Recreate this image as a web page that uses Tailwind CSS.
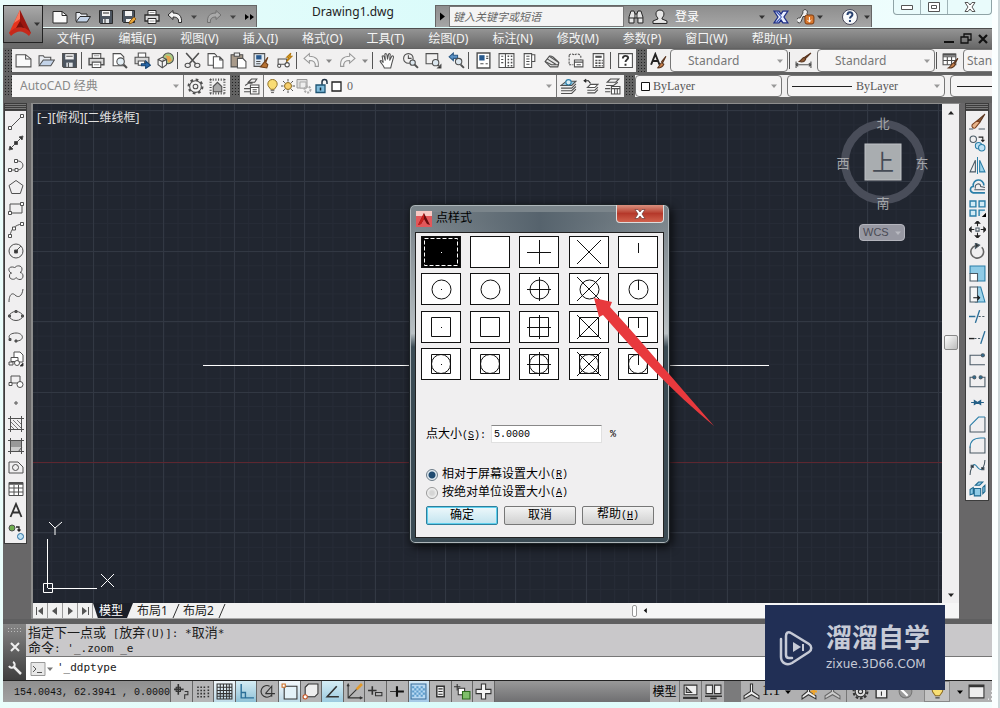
<!DOCTYPE html>
<html lang="zh-CN">
<head>
<meta charset="utf-8">
<meta name="viewport" content="width=device-width, initial-scale=1">
<title>Drawing1.dwg</title>
<script src="https://cdn.jsdelivr.net/npm/@tailwindcss/browser@4"></script>
</head>
<body class="relative flex min-h-screen flex-col overflow-x-hidden bg-linear-to-r from-[#eafdfb] via-[#d9fbfa] to-[#f4fefe] pl-[3px] pr-2 font-['Noto_Sans','Noto_Sans_CJK_SC',sans-serif] text-xs text-[#222]">

<svg class="hidden" aria-hidden="true">
  <symbol id="new" viewBox="0 0 16 16"><path fill="#fafafa" d="M1 2.500h9l5 4V14H1z"/><path d="M10 2.500V6.500h5"/></symbol>
  <symbol id="open" viewBox="0 0 16 16"><path fill="#e8ecf2" d="M1 12V3.500h4l1 1.500h6v2.500"/><path fill="#c3d3e8" d="M1 13l4-5.500h10.500L12 13z"/></symbol>
  <symbol id="save" viewBox="0 0 16 16"><path fill="#4c5560" d="M1.500 1.500h13v13h-12l-1-1z"/><path fill="#f2f2f2" stroke="none" d="M4 2h8v5H4z"/><path fill="#dfe3e6" stroke="none" d="M5 10h6v4H5z"/><path d="M5 4h6M7 10v4"/></symbol>
  <symbol id="saveas" viewBox="0 0 16 16"><path fill="#4c5560" d="M1.500 1.500h12v12h-11l-1-1z"/><path fill="#f2f2f2" stroke="none" d="M4 2h7v5H4zM5 10h5v3H5z"/><path fill="#e8a83c" stroke="#8d5a18" d="M8 15l1-3 4-4 2 2-4 4z"/></symbol>
  <symbol id="print" viewBox="0 0 16 16"><path fill="#fff" d="M4 6V1.500h8V6"/><path fill="#d8d8d8" stroke-width="1.300" d="M1 6h14v6H1z"/><path fill="#fff" d="M4 9.500h8v5H4z"/><path stroke="#999" d="M5.500 3.500h5M5.500 12h5"/></symbol>
  <symbol id="undo" viewBox="0 0 16 16"><path fill="#f4f4f4" d="M1 6l5-4.500V4c6 0 9 3 8.500 9.500h-3C12 9.500 10 8 6 8v2.500z"/></symbol>
  <symbol id="redo" viewBox="0 0 16 16"><path fill="inherit" d="M15 6l-5-4.500V4C4 4 1 7 1.500 13.500h3C4 9.500 6 8 10 8v2.500z"/></symbol>
  <symbol id="dd" viewBox="0 0 8 8"><path stroke="none" d="M1 2.500h6L4 6z"/></symbol>
</svg>

<!-- Title bar and menu -->
<header class="flex h-12">
  <div class="w-10 shrink-0 pt-[5px]">
    <button aria-label="应用程序菜单" class="flex h-[38px] w-10 items-center border border-[#222] bg-linear-to-b from-[#a9a9a9] to-[#6f6f6f]">
      <svg class="ml-[3px] h-8 w-[26px]" viewBox="0 0 26 32"><path fill="#e5341d" d="M13 2L2 25l6-1 5-9z"/><path fill="#9b1710" d="M13 2l11 23-6-1-5-9z"/><path fill="#c7291a" d="M2 25C8 17 18 17 24 25l-2 3c-6-6-12-6-18 0z"/><path fill="#7b100b" d="M9 20c3-1 5-1 8 0l-4-7z"/><path fill="#f8785c" d="M13 2L7 15l6-4z"/></svg>
      <svg class="size-2 fill-[#333]"><use href="#dd"/></svg>
    </button>
    <div class="h-[5px] bg-[#6a6a6a]"></div>
  </div>
  <div class="min-w-0 flex-1">
    <div class="flex h-7">
      <div class="mt-[5px] flex h-[22px] w-[214px] shrink-0 items-center border border-l-0 border-b-0 border-[#666] bg-linear-to-b from-[#8e8e8e] to-[#a0a0a0] fill-none stroke-[#2b2b2b] pl-[9px] [&>button>svg]:size-4 [&>button]:mr-[7px]">
        <button aria-label="新建"><svg><use href="#new"/></svg></button>
        <button aria-label="打开"><svg><use href="#open"/></svg></button>
        <button aria-label="保存"><svg><use href="#save"/></svg></button>
        <button aria-label="另存为"><svg><use href="#saveas"/></svg></button>
        <button aria-label="打印"><svg><use href="#print"/></svg></button>
        <button aria-label="放弃"><svg><use href="#undo"/></svg></button>
        <svg class="mr-2 size-2 fill-[#444]"><use href="#dd"/></svg>
        <button aria-label="重做" class="fill-[#aaa] stroke-[#707070]"><svg><use href="#redo"/></svg></button>
        <svg class="mr-2 size-2 fill-[#444]"><use href="#dd"/></svg>
        <svg class="h-2 w-[9px] fill-black stroke-none" viewBox="0 0 9 8"><path d="M0 1l4 3-4 3zM5 1l4 3-4 3z"/></svg>
      </div>
      <h1 class="flex-1 truncate pl-[14px] text-center leading-6">Drawing1.dwg</h1>
      <div class="mt-[5px] flex h-[22px] w-[437px] shrink-0 items-center border border-b-0 border-[#666] bg-linear-to-b from-[#8e8e8e] to-[#a6a6a6] fill-none stroke-[#222]">
        <svg class="h-full w-[13px]" viewBox="0 0 13 20"><path fill="#000" stroke="none" d="M4 6l5 4-5 4z"/></svg>
        <input type="text" aria-label="搜索" placeholder="键入关键字或短语" class="h-full w-[176px] border border-[#777] bg-[#f4f4f4] px-[3px] text-[11px] italic placeholder:text-[#666]">
        <svg class="ml-1 size-4" viewBox="0 0 16 16"><path fill="#e6e6e6" d="M1 8l2-6h3l1 3h2l1-3h3l2 6v6h-5V9H6v5H1zM1 9h5M10 9h5M7 5v4M9 5v4"/></svg>
        <svg class="ml-2 size-4" viewBox="0 0 16 16"><path fill="#e6e6e6" d="M8 1c3 0 4 2 4 4 0 3-2 3-2 5l5 2v2.500H1V12l5-2C6 8 4 8 4 5c0-2 1-4 4-4z"/></svg>
        <button class="ml-[7px] w-[84px] text-left text-white">登录</button>
        <svg class="size-2 fill-[#333]"><use href="#dd"/></svg>
        <svg class="ml-[7px] size-4" viewBox="0 0 16 16"><path fill="#e9efff" stroke="#1f2f86" stroke-width="1.300" d="M1 2h5l2 3 2-3h5l-4 6 4 6h-5l-2-3-2 3H1l4-6z"/><path fill="#3452b5" stroke="none" d="M3 3l5 5-5 5h2l4-5-4-5z"/></svg>
        <svg class="ml-2 size-[18px]" viewBox="0 0 18 18"><path fill="#eee" stroke="#444" d="M8 1.500a2.500 2.500 0 0 1 2 4l1 3H6L4 14a2.500 2.500 0 1 1-1-4l3-5a2.500 2.500 0 0 1 2-3.500z"/><rect x="8" y="7" width="9" height="9" rx="2" fill="#d9782e" stroke="#7a3a10"/><path stroke="#fff" d="M12.500 9v5M10.500 12l2 2 2-2"/></svg>
        <svg class="ml-px size-2 fill-[#333]"><use href="#dd"/></svg>
        <svg class="ml-[17px] size-[18px]" viewBox="0 0 18 18"><circle cx="9" cy="9" r="7.500" fill="#f7f9fb" stroke="#445"/><path stroke="#27406f" stroke-width="2" d="M6.500 7c0-3.500 5-3.500 5-.5C11.500 8.500 9 8.500 9 10.500M9 12v2"/></svg>
        <svg class="ml-1 size-2 fill-[#333]"><use href="#dd"/></svg>
      </div>
      <div class="ml-[21px] flex h-[15px] w-[99px] shrink-0 rounded-b border border-t-0 border-[#8fa3a6] bg-[#e9fbfb] fill-white stroke-[#555] [&>button]:grid [&>button]:place-items-center">
        <button aria-label="最小化" class="w-[27px] border-r border-[#9fb3b6]"><svg class="h-[5px] w-3" viewBox="0 0 12 5"><path d="M.5.5h11v4H.5z"/></svg></button>
        <button aria-label="还原" class="w-[27px] border-r border-[#9fb3b6]"><svg class="h-[10px] w-3" viewBox="0 0 12 10"><path d="M.5.5h11v9H.5zM3.500 3.500h5v3h-5z"/></svg></button>
        <button aria-label="关闭" class="flex-1"><svg class="h-[10px] w-3" viewBox="0 0 12 10"><path d="M1 .5h3l2 2.500L8 .5h3L8 5l3 4.500H8L6 7 4 9.500H1L4 5z"/></svg></button>
      </div>
    </div>
    <nav class="flex h-5 items-center gap-6 border-t border-[#4e4e4e] bg-linear-to-b from-[#949494] to-[#686868] pl-[14px] pr-1 whitespace-nowrap text-[#f4f4f4]">
      <a href="#">文件(F)</a><a href="#">编辑(E)</a><a href="#">视图(V)</a><a href="#">插入(I)</a><a href="#">格式(O)</a><a href="#">工具(T)</a><a href="#">绘图(D)</a><a href="#">标注(N)</a><a href="#">修改(M)</a><a href="#">参数(P)</a><a href="#">窗口(W)</a><a href="#">帮助(H)</a>
      <span class="ml-auto flex gap-[6px] fill-none stroke-[#111]">
        <button aria-label="最小化图形"><svg class="h-3 w-[10px]" viewBox="0 0 10 12"><path stroke-width="2" d="M0 9h10"/></svg></button>
        <button aria-label="还原图形"><svg class="size-3" viewBox="0 0 12 12"><path stroke-width="1.300" d="M4 4V1h7v6H8M1 4h7v6H1z"/></svg></button>
        <button aria-label="关闭图形"><svg class="h-3 w-[10px]" viewBox="0 0 10 12"><path stroke-width="2.200" d="M1 2l8 8M9 2l-8 8"/></svg></button>
      </span>
    </nav>
  </div>
</header>

<!-- Toolbars -->
<div class="flex h-[55px] flex-col gap-[3px] overflow-hidden bg-[#626262] pt-px pl-px">
  <div class="flex h-[23px] shrink-0 items-stretch fill-none stroke-[#505050] [&_button]:grid [&_button]:w-[22px] [&_button]:shrink-0 [&_button]:place-items-center [&_button>svg]:size-[17px]">
    <i class="w-2 shrink-0 bg-[radial-gradient(#222_1px,transparent_1px)] bg-size-[3px_3px]"></i>
    <div class="flex shrink-0 items-stretch gap-px bg-[#f1f0f0]">
      <button aria-label="新建"><svg><use href="#new"/></svg></button>
      <button aria-label="打开"><svg><use href="#open"/></svg></button>
      <button aria-label="保存"><svg><use href="#save"/></svg></button>
      <i class="my-[3px] mr-[2px] w-px bg-[#555]"></i>
      <button aria-label="打印"><svg><use href="#print"/></svg></button>
      <button aria-label="打印预览"><svg viewBox="0 0 16 16"><path fill="#fff" d="M2 1.500h7l3 3V13H2z"/><circle cx="9" cy="9" r="3.500" fill="#e3eef5"/><path stroke-width="2" d="M12 12l3 3"/></svg></button>
      <button aria-label="发布"><svg viewBox="0 0 16 16"><path fill="#fff" d="M4 5V1h7v4"/><path fill="#d8d8d8" d="M1 5h13v6H1z"/><path fill="#fff" d="M4 8.500h6v4H4z"/><path fill="#2a6aad" stroke="#174674" d="M7 11h4V8.500l4.500 4-4.500 3V13H7z"/></svg></button>
      <button aria-label="三维打印"><svg viewBox="0 0 16 16"><circle cx="10.500" cy="6" r="5" fill="#a9cb85"/><path fill="#e9a24f" stroke="none" d="M8 3l4 1 2 4-3 2z"/><path fill="#f4f4f4" d="M1 7l4-2 4 2v5l-4 3-4-3zM1 7l4 2 4-2M5 9v6"/></svg></button>
      <i class="my-[3px] mr-[2px] w-px bg-[#555]"></i>
      <button aria-label="剪切"><svg viewBox="0 0 16 16"><path stroke-width="1.500" d="M2 1l9 10M14 1L5 11"/><ellipse cx="3.500" cy="12.500" rx="2.500" ry="2"/><ellipse cx="12.500" cy="12.500" rx="2.500" ry="2"/></svg></button>
      <button aria-label="复制"><svg viewBox="0 0 16 16"><path fill="#fff" d="M1 1.500h6l2 2v9H1z"/><path fill="#fff" d="M6 4.500h6l3 3V15H6zM12 4.500v3h3"/></svg></button>
      <button aria-label="粘贴"><svg viewBox="0 0 16 16"><path fill="#a99b8b" d="M1 2.500h11V14H1z"/><path fill="#eee" d="M4 1h5v3H4z"/><path fill="#fff" d="M7 6h5l3 3v6H7z"/></svg></button>
      <button aria-label="特性匹配"><svg viewBox="0 0 16 16"><path fill="#dfe9f2" d="M1 1.500h10v12H1z"/><path fill="#27598e" stroke="none" d="M3 3h5v4H3z"/><path d="M3 9h4M3 11h4"/><path fill="#b87333" stroke="#70401a" d="M14 5l-2 5 2 2-1 3-6-1 4-5z"/></svg></button>
      <button aria-label="块编辑器"><svg viewBox="0 0 16 16"><path d="M2 6.500h8v5H2z"/><circle cx="10.500" cy="12" r="2" fill="#fff"/><circle cx="3" cy="13" r="1.500" fill="#fff"/><path fill="#f3b62f" stroke="#b47a10" d="M14 1l-4 4h2l-2 4 5-5h-2z"/></svg></button>
      <i class="my-[3px] mr-[2px] w-px bg-[#555]"></i>
      <button aria-label="放弃" class="stroke-[#999]"><svg><use href="#undo"/></svg></button>
      <svg class="mx-[2px] my-auto size-2 fill-[#888]"><use href="#dd"/></svg>
      <button aria-label="重做" class="fill-[#f4f4f4] stroke-[#999]"><svg><use href="#redo"/></svg></button>
      <svg class="mx-[2px] my-auto size-2 fill-[#888]"><use href="#dd"/></svg>
      <i class="my-[3px] mr-[2px] w-px bg-[#555]"></i>
      <button aria-label="平移"><svg viewBox="0 0 16 16"><path fill="#fff" d="M5 15c-1-3-3-4-4-6.500 1-1 2 0 3 1.500L3 4c1-1 2 0 2 1l1 3-.5-6c1-1 2 0 2 1L8 7l1-5c1-1 2 0 1.500 1L10 8l2-4c1-1 2 0 1.500 1.500L12 11l-1 4z"/></svg></button>
      <button aria-label="实时缩放"><svg viewBox="0 0 16 16"><circle cx="6" cy="6" r="4.500"/><path d="M6 3v3h3"/><circle cx="10" cy="10" r="2.500" fill="#dbe6ee"/><path stroke-width="1.800" d="M12 12l3 3"/></svg></button>
      <button aria-label="窗口缩放"><svg viewBox="0 0 16 16"><path d="M1 1.500h11V11H1z"/><circle cx="10" cy="10" r="3" fill="#dbe6ee"/><path stroke-width="1.800" d="M12 12l1 1"/><path fill="#000" d="M15 12v3h-3z"/></svg></button>
      <button aria-label="缩放上一个"><svg viewBox="0 0 16 16"><path fill="#5c93c7" stroke="#2d5a86" d="M1 4.500L5 1v2h4v3H5v2z"/><circle cx="10" cy="9" r="3" fill="#dbe6ee"/><path stroke-width="1.800" d="M12 12l3 3"/></svg></button>
      <i class="my-[3px] mr-[2px] w-px bg-[#555]"></i>
      <button aria-label="特性"><svg viewBox="0 0 16 16"><path stroke-width="1.300" fill="#fff" d="M2 1h12v14H2z"/><path fill="#27598e" stroke="none" d="M4 3h5v5H4z"/><path d="M10.500 4h2M10.500 6h2M5 11h3M10 11h2"/></svg></button>
      <button aria-label="设计中心"><svg viewBox="0 0 16 16"><path fill="#fff" d="M1 1.500h14v13H1zM7 1.500v13M3 4h2M3 7h2M3 10h2"/><path stroke-width="1.500" d="M9 4h1.500M12 4h1.500M9 7h1.500M12 7h1.500M9 10h1.500M12 10h1.500M9 13h1.500M12 13h1.500"/></svg></button>
      <button aria-label="工具选项板"><svg viewBox="0 0 16 16"><path fill="#fff" d="M3 1.500h7v13H3zM10 2.500h3V9h-3"/><path d="M5 4h3M5 6.500h3M5 9h3M5 11.500h3"/></svg></button>
      <button aria-label="图纸集"><svg viewBox="0 0 16 16"><path fill="#e6e6e6" d="M1 9l4-5 9 6-1 4H6z"/><path d="M1 9l6 3h7M3 6.500l8 5M5 4c2-1 4 1 9 6"/></svg></button>
      <button aria-label="标记集"><svg viewBox="0 0 16 16"><path stroke-dasharray="2 1" d="M2 3c2-2 4-1 5 0 2-2 5-1 6 1v3M2 3v9h4"/><path fill="#fff" d="M7 7.500h8V14H7zM7 9.500h8M9 12h4"/></svg></button>
      <button aria-label="计算器"><svg viewBox="0 0 16 16"><path fill="#fff" d="M3 1.500h10v13H3z"/><path stroke-width="2" d="M5 4.500h6"/><path stroke-dasharray="2 1" stroke-width="1.500" d="M5 8h7M5 10.500h7M5 13h7"/></svg></button>
      <i class="my-[3px] mr-[2px] w-px bg-[#555]"></i>
      <button aria-label="帮助"><svg viewBox="0 0 16 16"><path fill="#fff" d="M1.500 1.500h13v13h-13z"/><path stroke="#333" stroke-width="1.800" d="M5.500 6c0-3 5-3 5-.5C10.500 7 8 7.500 8 9.500M8 11v2"/></svg></button>
    </div>
    <i class="mx-px w-[9px] shrink-0 bg-[radial-gradient(#222_1px,transparent_1px)] bg-size-[3px_3px]"></i>
    <div class="flex min-w-0 flex-1 items-stretch overflow-hidden bg-[#f1f0f0]">
      <button aria-label="文字样式"><svg viewBox="0 0 16 16"><path stroke="#222" stroke-width="1.800" d="M1 12L5 2l4 10M2.500 8.500h5"/><path fill="#c9804a" stroke="#5a3620" d="M15 4l-4 5 1 1zM7 15c2-1 2-4 4-5l2 1.500c-1 2.500-3 3.500-6 3.500z"/></svg></button>
      <div class="mx-px flex w-[118px] shrink-0 items-center rounded-sm border border-[#777] bg-[#f6f5f5] pr-[3px] text-[#777]"><select aria-label="文字样式名" class="min-w-0 flex-1 appearance-none pl-[17px]"><option>Standard</option></select><svg class="size-2 fill-[#999]"><use href="#dd"/></svg></div>
      <i class="my-[3px] w-px shrink-0 bg-[#555]"></i>
      <button aria-label="标注样式" class="mx-[2px]"><svg viewBox="0 0 16 16"><path d="M1 9v6M15 9v6M1 12h14M3 10.500L1 12l2 1.500M13 10.500l2 1.500-2 1.500"/><path fill="#8c5a34" stroke="#5a3620" d="M15 1L9 5l1 1zM4 9c2-1 3-4 5-4l1 2C9 9 7 10 4 9z"/></svg></button>
      <div class="mx-px flex w-[118px] shrink-0 items-center rounded-sm border border-[#777] bg-[#f6f5f5] pr-[3px] text-[#777]"><select aria-label="标注样式名" class="min-w-0 flex-1 appearance-none pl-[17px]"><option>Standard</option></select><svg class="size-2 fill-[#999]"><use href="#dd"/></svg></div>
      <i class="my-[3px] w-px shrink-0 bg-[#555]"></i>
      <button aria-label="表格样式" class="mx-[2px]"><svg viewBox="0 0 16 16"><path fill="#fff" d="M1 2h12v10H1z"/><path d="M1 4.500h12M1 8h12M5 4v8M9 4v8"/><path stroke-width="2" d="M1 2.500h12"/><path fill="#c9804a" stroke="#5a3620" d="M15 6l-4 4 1 1zM6 15c2-1 3-4 5-5l1.500 1.500C12 14 9 15.500 6 15z"/></svg></button>
      <div class="flex w-[118px] shrink-0 items-center rounded-sm border border-[#777] bg-[#f6f5f5] text-[#777]"><select aria-label="表格样式名" class="min-w-0 flex-1 appearance-none pl-[3px]"><option>Standard</option></select></div>
    </div>
  </div>

  <div class="flex h-[22px] shrink-0 items-stretch fill-none stroke-[#505050] [&_button]:grid [&_button]:w-[22px] [&_button]:shrink-0 [&_button]:place-items-center [&_button>svg]:size-[17px]">
    <i class="w-2 shrink-0 bg-[radial-gradient(#222_1px,transparent_1px)] bg-size-[3px_3px]"></i>
    <div class="flex w-[218px] shrink-0 items-stretch bg-[#f1f0f0]">
      <div class="flex w-[172px] items-center border-r border-[#777] bg-[#f6f5f5] pr-[3px] text-[#888]"><select aria-label="工作空间" class="min-w-0 flex-1 appearance-none pl-2"><option>AutoCAD 经典</option></select><svg class="size-2 fill-[#999]"><use href="#dd"/></svg></div>
      <button aria-label="工作空间设置"><svg viewBox="0 0 16 16"><circle cx="8" cy="8" r="6.500" stroke-width="2" stroke-dasharray="2.500 2.600"/><circle cx="8" cy="8" r="5.500" fill="#f4f4f4"/><circle cx="8" cy="8" r="2.200"/></svg></button>
      <button aria-label="我的工作空间"><svg viewBox="0 0 16 16"><path stroke-dasharray="1 1.500" stroke-width="2" d="M1 1.500h14M1 14.500h14M1.500 1v14M14.500 1v14"/><path fill="#aaa" d="M4 8l4-4 4 4v5H4z"/></svg></button>
    </div>
    <i class="mx-px w-2 shrink-0 bg-[radial-gradient(#222_1px,transparent_1px)] bg-size-[3px_3px]"></i>
    <div class="flex w-[384px] shrink-0 items-stretch bg-[#f1f0f0]">
      <button aria-label="图层特性"><svg viewBox="0 0 16 16"><path d="M5 4l3-3h5l-2 3zM2 7l3-2h4M1 10h6M1 13h6"/><path fill="#fff" d="M7 6.500h8V15H7zM7 9h8M9 11h4M9 13h4"/></svg></button>
      <div class="ml-px flex w-[294px] items-center border-x border-[#777] bg-[#f6f5f5] pr-[3px] pl-px [&>svg]:shrink-0">
        <svg class="size-[15px]" viewBox="0 0 16 16"><path fill="#f9dc74" stroke="#8a6a20" d="M6 11C5 9 3 8 3 5.500a5 5 0 0 1 10 0C13 8 11 9 10 11z"/><path d="M6 12.500h4M6.500 14.500h3"/></svg>
        <svg class="size-4" viewBox="0 0 16 16"><circle cx="8" cy="8" r="3.500" fill="#f6cf6e" stroke="#8a6a20"/><path stroke="#555" d="M8 1v2.500M8 12.500V15M1 8h2.500M12.500 8H15M3 3l1.800 1.800M11.200 11.200L13 13M13 3l-1.800 1.800M4.800 11.200L3 13"/></svg>
        <svg class="size-4" viewBox="0 0 16 16"><path fill="#ddd" stroke="#999" d="M1 1.500h10V10H1z"/><path fill="#eee" stroke="#aaa" d="M4 4h6v6H4z"/><circle cx="11.500" cy="11.500" r="3" stroke="#aaa" stroke-dasharray="2 1" stroke-width="2"/></svg>
        <svg class="ml-[2px] size-4" viewBox="0 0 16 16"><path stroke="#234" stroke-width="1.500" d="M8 7V4c0-3.500 5-3.500 5 0v2"/><path fill="#7fbcdc" stroke="#1f5473" stroke-width="1.300" d="M2 7h9v7.500H2z"/><path stroke="#123" stroke-width="1.500" d="M6.500 9.500v3"/></svg>
        <svg class="size-[13px]" viewBox="0 0 13 13"><path fill="#fff" stroke="#222" stroke-width="1.300" d="M2 2h9v9H2z"/></svg>
        <select aria-label="图层" class="min-w-0 flex-1 appearance-none pl-1 font-['Liberation_Serif',serif] text-[#666]"><option>0</option></select>
        <svg class="size-2 fill-[#999]"><use href="#dd"/></svg>
      </div>
      <button aria-label="置为当前"><svg viewBox="0 0 16 16"><path fill="#9cc8de" d="M1 7l5-4h9l-4 4z"/><circle cx="8" cy="4" r="2.500" fill="#d7ecf6" stroke="#2b7fa8"/><path d="M1 9.500h10l4-4M1 12h10l4-4M1 14.500h10l4-4"/></svg></button>
      <button aria-label="上一个图层"><svg viewBox="0 0 16 16"><path stroke="#222" d="M2 2.500h4L8 5M4 1L2 2.500 4 4"/><path fill="#fff" d="M5 9l3-3h7l-3 3zM5 11.500h7l3-3M5 14h7l3-3"/></svg></button>
      <button aria-label="图层状态"><svg viewBox="0 0 16 16"><path d="M3 4l3-3h8l-3 3zM2 7h7l4-3M1 10h5M1 13h5"/><path fill="#fff" d="M7 8h8v7H7zM7 10h8M10 10v5M12.500 10v5"/></svg></button>
    </div>
    <i class="mx-px w-[9px] shrink-0 bg-[radial-gradient(#222_1px,transparent_1px)] bg-size-[3px_3px]"></i>
    <div class="flex min-w-0 flex-1 items-stretch gap-[5px] overflow-hidden bg-[#f1f0f0] font-['Liberation_Serif',serif] text-[#555]">
      <div class="flex w-[147px] shrink-0 items-center rounded-sm border border-[#777] bg-[#f6f5f5] pr-[3px] pl-1"><svg class="size-[11px]" viewBox="0 0 11 11"><path fill="#fff" stroke="#111" d="M1.500 1.500h8v8h-8z"/></svg><select aria-label="颜色" class="min-w-0 flex-1 appearance-none pl-[2px]"><option>ByLayer</option></select><svg class="size-2 fill-[#999]"><use href="#dd"/></svg></div>
      <div class="flex w-[158px] shrink-0 items-center rounded-sm border border-[#777] bg-[#f6f5f5] pr-[3px] pl-1"><span class="h-px w-[60px] bg-[#222]"></span><select aria-label="线型" class="min-w-0 flex-1 appearance-none pl-1"><option>ByLayer</option></select><svg class="size-2 fill-[#999]"><use href="#dd"/></svg></div>
      <div class="flex w-[158px] shrink-0 items-center rounded-sm border border-[#777] bg-[#f6f5f5] pl-[6px]"><span class="h-px w-[60px] bg-[#222]"></span></div>
    </div>
  </div>
</div>

<!-- Work area -->
<main class="flex flex-1 items-stretch bg-[#686768] pl-px pr-[3px]">
  <aside class="flex w-[23px] shrink-0 flex-col self-start border border-[#3c3c3c] bg-[#f0eff0] fill-none stroke-[#505050]">
    <i class="h-[7px] border-b border-[#444] bg-[repeating-linear-gradient(#777_0_1px,#3c3c3c_1px_2px)]"></i>
    <div class="flex h-[432px] flex-col [&>button]:grid [&>button]:flex-1 [&>button]:place-items-center [&_svg]:size-4">
      <button aria-label="直线"><svg viewBox="0 0 16 16"><path d="M2 14L14 2"/><path fill="#fff" d="M.5 12.500h3v3h-3zM12.500.5h3v3h-3z"/></svg></button>
      <button aria-label="构造线"><svg viewBox="0 0 16 16"><path d="M2 14L14 2"/><path fill="#333" d="M1 15l1-4 3 3zM15 1l-1 4-3-3zM6.500 6.500h3v3h-3z"/></svg></button>
      <button aria-label="多段线"><svg viewBox="0 0 16 16"><path d="M1 13h8M8 4c9-1 9 9 1 9"/><path fill="#fff" d="M.5 11.500h3v3h-3zM7 11.500h3v3H7zM6.500 2.500h3v3h-3z"/></svg></button>
      <button aria-label="正多边形"><svg viewBox="0 0 16 16"><path d="M8 1.500l7 5-2.700 8H3.700L1 6.500z"/></svg></button>
      <button aria-label="矩形"><svg viewBox="0 0 16 16"><path d="M2 4h12v9H2z"/><path fill="#fff" d="M.5 11.500h3v3h-3zM12.500 2.500h3v3h-3z"/></svg></button>
      <button aria-label="圆弧"><svg viewBox="0 0 16 16"><path d="M2 14C3 7 7 3 14 2"/><path fill="#fff" d="M.5 12.500h3v3h-3zM4.500 5h3v3h-3zM12.500.5h3v3h-3z"/></svg></button>
      <button aria-label="圆"><svg viewBox="0 0 16 16"><circle cx="8" cy="8" r="7"/><path d="M8 8l5-5"/><path fill="#333" d="M6.500 7h3v3h-3z"/></svg></button>
      <button aria-label="修订云线"><svg viewBox="0 0 16 16"><path d="M3 8C0 6 0 2 4 2c1 0 2 0 2.500 1C8 0 14 0 14 4c0 2-1 3-2 3.500 4 0 4 7 0 7-2 0-3-1-4-2-1 3-7 2-6.500-1.500C1.500 9 2 8 4 8"/></svg></button>
      <button aria-label="样条曲线"><svg viewBox="0 0 16 16"><path d="M1 15C1 8 4 5 7 8s7 2 8-6"/></svg></button>
      <button aria-label="椭圆"><svg viewBox="0 0 16 16"><ellipse cx="8" cy="8" rx="6.500" ry="4.500"/><path fill="#555" d="M.5 7h2v2h-2zM13.500 7h2v2h-2zM7 2.500h2v2H7z"/></svg></button>
      <button aria-label="椭圆弧"><svg viewBox="0 0 16 16"><path d="M2 9C-1 5 4 3 8 3c8 0 9 8 0 8"/><path fill="#555" d="M1 8.500h2v2H1zM7 10h2v2H7z"/></svg></button>
      <button aria-label="插入块"><svg viewBox="0 0 16 16"><path fill="#fff" d="M6 1h6l3 3v7H6z"/><path fill="#fff" d="M3 6.500h7v4H3z"/><circle cx="9" cy="12" r="2.500" fill="#fff"/><path d="M1 11h4v3H1z"/><path fill="#000" d="M15 12v3h-3z"/></svg></button>
      <button aria-label="创建块"><svg viewBox="0 0 16 16"><path d="M3 3h9v7H3z"/><circle cx="12" cy="11.500" r="3" fill="#fff"/><path fill="#fff" d="M1 9.500h3v3H1z"/></svg></button>
      <button aria-label="点"><svg viewBox="0 0 16 16"><path fill="#fff" d="M7 7h2v2H7z"/></svg></button>
      <button aria-label="图案填充"><svg viewBox="0 0 16 16"><path d="M2.500 0v16M13.500 0v16M0 2.500h16M0 13.500h16"/><path stroke="#777" d="M3 6l7 7M3 10l3 3M5 4l8 8M9 4l4 4"/></svg></button>
      <button aria-label="渐变色"><svg viewBox="0 0 16 16"><path fill="#999" stroke="none" d="M3 3h10v7H3z"/><path fill="#ccc" stroke="none" d="M3 9h10v4H3z"/><path d="M2.500 0v16M13.500 0v16M0 2.500h16M0 13.500h16M10 14l4-5"/></svg></button>
      <button aria-label="面域"><svg viewBox="0 0 16 16"><path d="M1 3h9l5 5v6H1z"/><circle cx="7.500" cy="8.500" r="3"/></svg></button>
      <button aria-label="表格"><svg viewBox="0 0 16 16"><path fill="#fff" d="M1 1.500h14v13H1z"/><path stroke-width="2.500" d="M1 2.500h14"/><path d="M1 7h14M1 11h14M6 4v11M10.500 4v11"/></svg></button>
      <button aria-label="多行文字"><svg viewBox="0 0 16 16"><path stroke="#333" stroke-width="1.800" d="M2.500 15L8 2l5.500 13M4.500 10.500h7"/></svg></button>
      <button aria-label="添加选定对象"><svg viewBox="0 0 16 16"><circle cx="4" cy="4" r="3" fill="#6fae4f"/><circle cx="12.500" cy="12.500" r="3" fill="#bfe2f5" stroke="#2b6fa0"/><path stroke="#222" stroke-width="1.300" d="M8 3h3v4M9.500 5.500L11 7l1.500-1.500"/></svg></button>
    </div>
  </aside>

  <section class="mx-1 flex min-w-0 flex-1 flex-col border-l-2 border-t border-r-2 border-[#8d8d8d] border-r-[#686768]">
    <div class="flex flex-1">
      <div class="relative min-w-0 flex-1 overflow-hidden bg-[#212630]">
        <svg class="absolute inset-0 h-full w-full" fill="none" aria-label="绘图区">
          <defs><pattern id="minor" x="3.700" y="6.400" width="14.080" height="14.080" patternUnits="userSpaceOnUse"><path stroke="#262b36" d="M.5 0v14.080M0 .5h14.080"/></pattern></defs>
          <rect width="100%" height="100%" fill="url(#minor)"/>
          <path stroke="#323843" d="M60.500 0v600M130.500 0v600M201.500 0v600M271.500 0v600M342.500 0v600M412.500 0v600M482.500 0v600M553.500 0v600M623.500 0v600M694.500 0v600M764.500 0v600M834.500 0v600M905.500 0v600M0 6.500h2000M0 77.500h2000M0 147.500h2000M0 217.500h2000M0 288.500h2000M0 428.500h2000M0 499.500h2000"/>
          <path stroke="#5e2730" d="M0 358.500h2000"/>
          <path stroke="#fff" d="M170 261.500h566"/>
          <path stroke="#fff" d="M14.500 435v49M15 484.500h49M10.500 479.500h9v9h-9zM68 470l13 13M81 470l-13 13M16 418l6 6M29 418l-7 6v7"/>
        </svg>
        <p class="relative pt-[6px] pl-1 text-xs text-[#e0e0e0]"><a href="#">[−]</a><a href="#">[俯视]</a><a href="#">[二维线框]</a></p>
        <!-- View cube -->
        <svg class="absolute top-[9px] right-[11px] h-[100px] w-24 fill-[#a4a6aa] text-[13px]" viewBox="0 0 96 100" text-anchor="middle">
          <circle cx="48" cy="49" r="38" fill="none" stroke="#494d59" stroke-width="8"/>
          <rect x="30" y="31" width="36" height="36" fill="#a9adb0" stroke="#bfc2c5"/>
          <text x="48" y="15">北</text><text x="8" y="55">西</text><text x="87" y="55">东</text><text x="48" y="95">南</text>
          <text x="48" y="57" class="fill-[#454b55] text-[22px]">上</text>
        </svg>
        <button class="absolute top-[120px] right-[37px] flex h-[17px] w-[46px] items-center gap-[5px] rounded border border-[#b4b5bd] bg-[#9798a2] pl-[3px] font-['Liberation_Sans',sans-serif] text-[11px] text-[#4a4b55]">WCS<svg class="size-2 fill-[#b8b9c0]"><use href="#dd"/></svg></button>
      </div>
      <div class="flex w-[17px] flex-col items-center bg-[#f0eff0]">
        <svg class="mt-[5px] h-2 w-2 rotate-180 fill-[#222]"><use href="#dd"/></svg>
        <div class="mt-[218px] h-[15px] w-[14px] rounded-xs border border-[#888] bg-linear-to-br from-white to-[#bbb]"></div>
        <svg class="mt-auto mb-1 h-2 w-2 fill-[#222]"><use href="#dd"/></svg>
      </div>
    </div>
    <div class="flex h-4 items-stretch border-b border-[#aaa] bg-[#f1f1f1] whitespace-nowrap">
      <div class="flex w-[60px] fill-[#555] [&>button]:w-[15px] [&>button]:border-r [&>button]:border-[#999]">
        <button aria-label="第一个"><svg viewBox="0 0 14 14"><path d="M3 3h1v8H3zM10 3v8L5 7z"/></svg></button>
        <button aria-label="上一个"><svg viewBox="0 0 14 14"><path d="M9 3v8L4 7z"/></svg></button>
        <button aria-label="下一个"><svg viewBox="0 0 14 14"><path d="M5 3v8l5-4z"/></svg></button>
        <button aria-label="最后一个"><svg viewBox="0 0 14 14"><path d="M4 3v8l5-4zM10 3h1v8h-1z"/></svg></button>
      </div>
      <button class="w-10 bg-[#1b1f28] pr-1 leading-4 text-white [clip-path:polygon(0_0,100%_0,85%_100%,12%_100%)]">模型</button>
      <button class="pl-1 leading-4">布局1</button>
      <svg class="ml-1 h-4 w-2 fill-none stroke-[#333]" viewBox="0 0 8 16"><path d="M1 15L7 1"/></svg>
      <button class="pl-[3px] leading-4">布局2</button>
      <svg class="ml-1 h-4 w-2 fill-none stroke-[#333]" viewBox="0 0 8 16"><path d="M1 15L7 1"/></svg>
      <div class="ml-auto flex w-[327px] items-center bg-[#f6f6f6]"><i class="h-3 w-[5px] rounded-xs border border-[#999] bg-white"></i><svg class="ml-[5px] size-[7px] rotate-90 fill-[#111]"><use href="#dd"/></svg></div>
    </div>
  </section>

  <aside class="flex w-6 shrink-0 flex-col self-start border border-[#3c3c3c] bg-[#f0eff0] fill-none stroke-[#4a5a65]">
    <i class="h-[7px] border-b border-[#444] bg-[repeating-linear-gradient(#777_0_1px,#3c3c3c_1px_2px)]"></i>
    <div class="flex h-[389px] flex-col [&>button]:grid [&>button]:flex-1 [&>button]:place-items-center [&_svg]:size-[17px]">
      <button aria-label="删除"><svg viewBox="0 0 16 16"><path fill="#8c5a34" stroke="#5a3620" d="M15 1L8 7l2 2z"/><path fill="#e8b48a" stroke="#7a3f1d" d="M8 7l2 2-4 5c-2 1-4-1-3-3z"/><path d="M0 15h4M9 15h6"/></svg></button>
      <button aria-label="复制"><svg viewBox="0 0 16 16"><circle cx="4" cy="4" r="3"/><circle cx="9" cy="10" r="3" fill="#bfe2f5" stroke="#2b7fa8"/><circle cx="12" cy="12" r="3" fill="#bfe2f5" stroke="#2b7fa8"/><path stroke="#222" d="M9 2h4v4M11.500 4.500L13 6l1.500-1.500"/></svg></button>
      <button aria-label="镜像"><svg viewBox="0 0 16 16"><path d="M6 3v11H1z"/><path fill="#9ed3ea" stroke="#2b7fa8" d="M10 3v11h5z"/><path stroke="#2b7fa8" d="M8 0v16"/></svg></button>
      <button aria-label="偏移"><svg viewBox="0 0 16 16"><path stroke="#2b7fa8" stroke-width="1.500" d="M15 14H4c-4-1-3-6 0-6-1-8 10-8 10-1"/><path d="M15 11H5M6 10C5 5 11 4 11 8l4 1"/></svg></button>
      <button aria-label="阵列"><svg viewBox="0 0 16 16"><path stroke="#2b7fa8" fill="#d2ebf6" stroke-width="1.300" d="M1 1h5.500v5.500H1zM9.500 1H15v5.500H9.500zM1 9.500h5.500V15H1zM9.500 15V9.500H15"/><path fill="#000" stroke="none" d="M16 12v4h-4z"/></svg></button>
      <button aria-label="移动"><svg viewBox="0 0 16 16"><path d="M6.500 6.500h3v3h-3z"/><path stroke="#222" fill="#222" d="M8 0l2 2H6zM8 2v3M8 16l2-2H6zM8 14v-3M0 8l2-2v4zM2 8h3M16 8l-2-2v4zM14 8h-3"/></svg></button>
      <button aria-label="旋转"><svg viewBox="0 0 16 16"><path stroke="#666" stroke-width="1.500" d="M12 4a6 6 0 1 1-6-1.500"/><path fill="#333" d="M6 0l4 2-4 3z"/></svg></button>
      <button aria-label="缩放"><svg viewBox="0 0 16 16"><path fill="#8fcbe6" stroke="#2b7fa8" d="M1 1h14v14h-7V8H1z"/><path fill="#fff" d="M1 8h7v7H1z"/></svg></button>
      <button aria-label="拉伸"><svg viewBox="0 0 16 16"><path fill="#9ed3ea" stroke="#2b7fa8" d="M8 1h3l4 14H6z"/><path fill="#f6f6f6" d="M1 1h7v14H1z"/><path stroke="#111" d="M4 11h6M8 9l2 2-2 2"/></svg></button>
      <button aria-label="修剪"><svg viewBox="0 0 16 16"><path stroke-width="1.300" stroke="#2b6f98" d="M0 8h6M10 2L6 14"/><path stroke-dasharray="2 1.500" d="M9 8h7"/></svg></button>
      <button aria-label="延伸"><svg viewBox="0 0 16 16"><path stroke-width="1.300" stroke="#222" d="M0 9h5"/><path stroke-dasharray="2 1.500" d="M5 9h6"/><path stroke="#2b6f98" stroke-width="1.300" d="M15 2l-4 12"/></svg></button>
      <button aria-label="打断于点"><svg viewBox="0 0 16 16"><path d="M13 4H1v9h14"/><circle cx="13" cy="4" r="1.500" fill="#2b6f98"/></svg></button>
      <button aria-label="打断"><svg viewBox="0 0 16 16"><path d="M4 4H1v9h14V4h-3"/><circle cx="5" cy="4" r="1.500" fill="#2b6f98"/><circle cx="11" cy="4" r="1.500" fill="#2b6f98"/></svg></button>
      <button aria-label="合并"><svg viewBox="0 0 16 16"><path stroke="#245f86" fill="#245f86" d="M2 8h12M5 6l3 2-3 2zM11 6L8 8l3 2z"/></svg></button>
      <button aria-label="倒角"><svg viewBox="0 0 16 16"><path d="M15 1v14H1V9"/><path stroke="#2b7fa8" d="M1 9l8-8h6"/></svg></button>
      <button aria-label="圆角"><svg viewBox="0 0 16 16"><path d="M15 1v14H1V9"/><path stroke="#2b7fa8" d="M1 10C1 4 5 1 11 1h4"/></svg></button>
      <button aria-label="光顺曲线"><svg viewBox="0 0 16 16"><path stroke="#2b7fa8" d="M3 7c4-6 5 6 10 2"/><path d="M1 15c0-4 1-6 2-8M13 9c1-2 2-4 2-8"/><path fill="#222" d="M2 6h2v2H2zM12 8h2v2h-2z"/></svg></button>
      <button aria-label="分解"><svg viewBox="0 0 16 16"><path fill="#8fcbe6" stroke="#1f6a90" d="M5 7h6v7H5zM1 8l3-2v6l-3 1zM6 4l3-3h4l-3 3zM13 6l2-2v6l-2 2z"/></svg></button>
    </div>
  </aside>
</main>

<!-- Command line -->
<section class="flex h-[62px] border-b border-[#222] bg-[#5f5f60] pt-[5px]">
  <div class="flex w-[23px] flex-col items-center justify-between bg-linear-to-b from-[#858585] to-[#3f3f3f] pt-[3px] pb-[5px] fill-none stroke-[#eee]">
    <i class="h-[6px] w-4 bg-[radial-gradient(#bbb_1px,transparent_1px)] bg-size-[3px_3px]"></i>
    <button aria-label="关闭命令行"><svg class="size-[10px]" viewBox="0 0 10 10"><path stroke-width="2" d="M1 1l8 8M9 1L1 9"/></svg></button>
    <button aria-label="自定义"><svg class="size-[14px]" viewBox="0 0 14 14"><path stroke-width="2.500" d="M6 6l7 7"/><path stroke-width="2" d="M5 1a3 3 0 1 1-4 4"/></svg></button>
  </div>
  <div class="min-w-0 flex-1">
    <div class="h-[33px] border-b border-[#777] bg-[#c9c8ca] pl-[2px] text-[13px] leading-4 whitespace-pre text-[#1b1b1b] [&_span]:font-['DejaVu_Sans_Mono',monospace] [&_span]:text-[11px] [&>p]:h-[15px]"><p>指定下一点或<span> [</span>放弃<span>(U)]: *</span>取消<span>*</span></p><p>命令<span>: '_.zoom _e</span></p></div>
    <label class="flex h-[23px] items-center bg-white pl-1">
      <svg class="size-4" viewBox="0 0 16 16"><path fill="#e8e8e8" stroke="#999" d="M1 1.500h14v13H1z"/><path fill="none" stroke="#555" d="M3 5l3 3-3 3M7 11.500h5"/></svg>
      <svg class="mr-[3px] size-2 fill-[#777]"><use href="#dd"/></svg>
      <input type="text" aria-label="命令" value="'_ddptype" class="min-w-0 flex-1 font-['DejaVu_Sans_Mono',monospace] text-[11px] text-[#1b1b1b] outline-none">
    </label>
  </div>
</section>

<!-- Status bar -->
<footer class="mb-[6px] flex h-[21px] items-stretch bg-linear-to-b from-[#999] to-[#6f6f71] fill-none stroke-[#333] [&_button]:grid [&_button]:shrink-0 [&_button]:place-items-center [&_button>svg]:size-[17px]">
  <output class="w-[167px] shrink-0 bg-linear-to-b from-[#8f8f8f] to-[#a2a2a2] pl-[11px] font-['Liberation_Mono',monospace] text-[10px] leading-6 whitespace-pre text-[#111]">154.0043, 62.3941 , 0.0000</output>
  <div class="flex w-[325px] shrink-0 bg-[#b5b5b6] [&>button]:flex-1 [&>button]:border-l [&>button]:border-[#666]">
    <button aria-label="推断约束"><svg viewBox="0 0 16 16"><path stroke-width="1.500" d="M1 6h9M5 1v10"/><path d="M3 4h4v4H3zM11 8h3v3h-3v4"/></svg></button>
    <button aria-label="捕捉模式"><svg viewBox="0 0 16 16"><path stroke-dasharray="1.500 1.500" stroke-width="1.500" d="M3 4h8M3 7h8M3 10h8M3 13h8M13.500 3v11"/></svg></button>
    <button aria-label="栅格显示" class="bg-linear-to-b from-[#f2f8fb] to-[#bcd8e6]"><svg viewBox="0 0 16 16"><path d="M1 1h14v14H1zM1 4h14M1 7h14M1 10h14M1 12.500h14M4 1v14M7 1v14M10 1v14M12.500 1v14"/></svg></button>
    <button aria-label="正交模式" class="bg-linear-to-b from-[#d5edf5] to-[#8fc1d6]"><svg viewBox="0 0 16 16"><path stroke="#2b6f98" stroke-width="1.300" d="M3 1v13h12M3 9h4v5"/></svg></button>
    <button aria-label="极轴追踪"><svg viewBox="0 0 16 16"><path d="M10 3a5.500 5.500 0 1 0 2 8M6 10h9M6 10l6-7v10"/></svg></button>
    <button aria-label="对象捕捉" class="bg-linear-to-b from-[#f2f8fb] to-[#bcd8e6]"><svg viewBox="0 0 16 16"><path fill="#e4f2f8" d="M3 3h12v12H3z"/><path stroke="#c96a1f" fill="#fff" d="M1 1h3v3H1z"/></svg></button>
    <button aria-label="三维对象捕捉"><svg viewBox="0 0 16 16"><path fill="#eee" d="M3 4l3-3h9v9l-3 3H3z"/><circle cx="3" cy="13" r="2" stroke="#c9531f" fill="#fff"/></svg></button>
    <button aria-label="对象捕捉追踪" class="bg-linear-to-b from-[#d5edf5] to-[#9ccbe0]"><svg viewBox="0 0 16 16"><path stroke-width="1.500" d="M12 3L3 13h11"/></svg></button>
    <button aria-label="动态UCS"><svg viewBox="0 0 16 16"><path d="M2 1v13h13M2 14l8-8M1 3l1-2 1 2M13 13l2 1-2 1"/><path stroke="#e39a2a" stroke-width="2.500" d="M10 6l5-5"/></svg></button>
    <button aria-label="动态输入"><svg viewBox="0 0 16 16"><path stroke-width="1.500" d="M1 7h8M5 3v8"/><path d="M8 9h6v3H8z"/></svg></button>
    <button aria-label="线宽"><svg viewBox="0 0 16 16"><path d="M1 8h6"/><path stroke="#111" stroke-width="2" d="M7 8h7M7.500 3v10"/></svg></button>
    <button aria-label="透明度" class="bg-linear-to-b from-[#d5e8f5] to-[#a4c8e6]"><svg viewBox="0 0 16 16"><path fill="#b7d8f2" stroke="#3a6f9c" d="M1 1h14v14H1z"/><path stroke="#5d9ccc" stroke-dasharray="2 2" stroke-width="2" d="M2 4h12M4 6h10M2 8h12M4 10h10M2 12h12"/></svg></button>
    <button aria-label="快捷特性"><svg viewBox="0 0 16 16"><path fill="#eee" stroke-width="1.400" d="M4.500 3h7v10h-7z"/><path d="M6 5.500h4M6 8h4M6 10.500h4"/></svg></button>
    <button aria-label="选择循环"><svg viewBox="0 0 16 16"><path d="M0 3.500h6M3 1v6"/><path fill="#fff" d="M4 5h6v6H4z"/><path fill="#7fbf6a" stroke="#2c6a1c" d="M8 8h7v7H8z"/></svg></button>
    <button aria-label="注释监视器" class="border-r"><svg viewBox="0 0 16 16"><path fill="#f4f4f4" d="M6 1h4v5h5v4h-5v5H6v-5H1V6h5z"/></svg></button>
  </div>
  <div class="ml-auto flex w-[342px] shrink-0 items-stretch bg-[#b0b0b1] text-black">
    <button class="w-[30px] border-r border-[#777]">模型</button>
    <button aria-label="快速查看布局" class="w-[22px] border-r border-[#777]"><svg viewBox="0 0 16 16"><path fill="#eee" d="M2 2h12v9H2zM4 4v5h5z"/><path stroke-width="2" d="M1 14h14"/></svg></button>
    <button aria-label="快速查看图形" class="w-[22px]"><svg viewBox="0 0 16 16"><path fill="#eee" d="M1 2h6v8H1zM9 2h6v8H9z"/><path stroke-width="1.500" d="M0 12.500h16M5 14.500h6"/></svg></button>
    <i class="w-[17px] bg-[#7b7b7c]"></i>
    <button aria-label="注释比例" class="w-[21px]"><svg viewBox="0 0 16 16"><path fill="#eee" d="M7 1h2v7l6 4v3l-7-4-7 4v-3l6-4z"/></svg></button>
    <span class="w-5 font-['Liberation_Serif',serif] text-sm leading-5">1:1</span>
    <svg class="mx-[2px] my-auto size-2 fill-black"><use href="#dd"/></svg>
    <button aria-label="注释可见性" class="ml-1 w-[23px]"><svg viewBox="0 0 16 16"><path fill="#eee" d="M6 1h2v7l6 4v3l-7-4-6 4v-3l5-4z"/><path stroke="#f0a52a" stroke-width="2" d="M12 5v6M9 8h6"/></svg></button>
    <button aria-label="自动缩放" class="w-[23px]"><svg viewBox="0 0 16 16"><path fill="#ccc" stroke="#666" d="M7 1h2v7l6 4v3l-7-4-7 4v-3l6-4z"/></svg></button>
    <i class="mx-[2px] w-px bg-[#777]"></i>
    <button aria-label="切换工作空间" class="w-[23px]"><svg viewBox="0 0 16 16"><circle cx="8" cy="8" r="6.500" stroke-width="2" stroke-dasharray="2.500 1.600"/><circle cx="8" cy="8" r="5" fill="#ddd"/><circle cx="8" cy="8" r="2"/></svg></button>
    <button aria-label="锁定" class="w-5"><svg viewBox="0 0 16 16"><path fill="#eee" stroke-width="1.300" d="M2 6h10v8H2z"/><path d="M4 6V3h5v3M7 8v4"/></svg></button>
    <button aria-label="硬件加速" class="w-[26px]"><svg viewBox="0 0 16 16"><circle cx="8" cy="8" r="6" fill="#9a9a9a" stroke="#777"/><path stroke="#fff" stroke-width="2" d="M4 6l6 6"/></svg></button>
    <button aria-label="隔离对象" class="ml-[6px] w-[26px] border border-[#888] bg-[#c3c3c3]"><svg viewBox="0 0 16 16"><path fill="#f9e074" stroke="#8a6a20" d="M6 12C5 10 3 9 3 6.500a5 5 0 0 1 10 0C13 9 11 10 10 12z"/><path d="M6 14h4"/></svg></button>
    <svg class="my-auto mr-[3px] ml-[6px] size-2 fill-black"><use href="#dd"/></svg>
    <button aria-label="全屏显示" class="w-[19px]"><svg viewBox="0 0 16 16"><path fill="#eee" d="M1 2h14v12H1z"/><path stroke-width="2" d="M1 3h14"/></svg></button>
    <i class="mt-2 flex-1 bg-[radial-gradient(#eee_1px,transparent_1px)] bg-size-[4px_4px] [clip-path:polygon(100%_0,100%_100%,20%_100%)]"></i>
  </div>
</footer>

<i class="absolute inset-y-0 right-0 w-2 border-r-2 border-[#cfd8da] bg-[#fbffff]"></i>

<!-- Point style dialog -->
<div role="dialog" aria-labelledby="dlg" class="absolute top-[204px] left-[409px] w-[261px] rounded-md border border-[#1c2226] bg-linear-to-b from-[#7b858b] from-5% via-[#b9c0c4] via-38% to-[#3b4b54] to-42% p-[5px] pt-0 font-['Liberation_Mono','Noto_Sans_CJK_SC',monospace] text-black shadow-[0_0_0_1px_#aeb6ba_inset,2px_3px_10px_rgba(0,0,0,0.8)]">
  <div class="flex h-[27px] items-center gap-1 bg-linear-to-r from-transparent via-[#56636d] via-50% to-transparent bg-size-[100%_20px] bg-bottom bg-no-repeat pl-px">
    <svg class="size-4" viewBox="0 0 16 16"><path fill="#f7c9c4" d="M0 0h16v16H0z"/><path fill="#e2575a" d="M0 5h16v11H0z"/><path fill="#6d0d0f" d="M8 2l6 12-3-1-3-5-3 5-3 1z"/><path fill="#c8201c" d="M8 2L2 14l3-1 3-5z"/></svg>
    <h2 id="dlg" class="text-xs">点样式</h2>
    <button aria-label="关闭" class="ml-auto grid h-[18px] w-12 place-items-center self-start rounded-b border border-t-0 border-[#ddd] bg-linear-to-b from-[#d9907f] via-[#b5382a] via-50% to-[#d0604c]"><svg class="h-[10px] w-3" viewBox="0 0 12 10"><path fill="#fff" stroke="#6b3a36" stroke-width=".7" d="M1 .5h3l2 2.500L8 .5h3L8 5l3 4.500H8L6 7 4 9.500H1L4 5z"/></svg></button>
  </div>
  <div class="h-[306px] border border-[#222] bg-[#f0eff0] px-[5px] pt-[3px]">
    <div class="grid h-[144px] grid-cols-5 content-between justify-between gap-x-[9px] fill-none stroke-[#111] [&_svg]:h-[30px] [&_svg]:w-[38px] [&>button]:h-[32px] [&>button]:w-10 [&>button]:border [&>button]:border-[#111] [&>button]:bg-white">
      <button aria-label="样式 1"><svg viewBox="0 0 38 30"><path fill="#000" d="M0 0h38v30H0z"/><path stroke="#fff" stroke-dasharray="4 2" d="M2.500 1.500h33v27h-33z"/><path stroke="#fff" d="M19 15.500h1"/></svg></button>
      <button aria-label="样式 2"><svg></svg></button>
      <button aria-label="样式 3"><svg viewBox="0 0 38 30"><path d="M19.500 3v24M7 15.500h24"/></svg></button>
      <button aria-label="样式 4"><svg viewBox="0 0 38 30"><path d="M7 3l24 24M31 3L7 27"/></svg></button>
      <button aria-label="样式 5"><svg viewBox="0 0 38 30"><path d="M19.500 6v10"/></svg></button>

      <button aria-label="样式 6"><svg viewBox="0 0 38 30"><circle cx="19.500" cy="15.500" r="9.500"/><path d="M19 15.500h1"/></svg></button>
      <button aria-label="样式 7"><svg viewBox="0 0 38 30"><circle cx="19.500" cy="15.500" r="9.500"/></svg></button>
      <button aria-label="样式 8"><svg viewBox="0 0 38 30"><circle cx="19.500" cy="15.500" r="9.500"/><path d="M19.500 3v24M7 15.500h24"/></svg></button>
      <button aria-label="样式 9"><svg viewBox="0 0 38 30"><circle cx="19.500" cy="15.500" r="9.500"/><path d="M7 3l24 24M31 3L7 27"/></svg></button>
      <button aria-label="样式 10"><svg viewBox="0 0 38 30"><circle cx="19.500" cy="15.500" r="9.500"/><path d="M19.500 6v10"/></svg></button>

      <button aria-label="样式 11"><svg viewBox="0 0 38 30"><path d="M9.500 5.500h19v19h-19zM19 15.500h1"/></svg></button>
      <button aria-label="样式 12"><svg viewBox="0 0 38 30"><path d="M9.500 5.500h19v19h-19z"/></svg></button>
      <button aria-label="样式 13"><svg viewBox="0 0 38 30"><path d="M9.500 5.500h19v19h-19zM19.500 3v24M7 15.500h24"/></svg></button>
      <button aria-label="样式 14"><svg viewBox="0 0 38 30"><path d="M9.500 5.500h19v19h-19zM7 3l24 24M31 3L7 27"/></svg></button>
      <button aria-label="样式 15"><svg viewBox="0 0 38 30"><path d="M9.500 5.500h19v19h-19zM19.500 6v10"/></svg></button>

      <button aria-label="样式 16"><svg viewBox="0 0 38 30"><circle cx="19" cy="15" r="9.500"/><path d="M9.500 5.500h19v19h-19zM19 15.500h1"/></svg></button>
      <button aria-label="样式 17"><svg viewBox="0 0 38 30"><circle cx="19" cy="15" r="9.500"/><path d="M9.500 5.500h19v19h-19z"/></svg></button>
      <button aria-label="样式 18"><svg viewBox="0 0 38 30"><circle cx="19" cy="15" r="9.500"/><path d="M9.500 5.500h19v19h-19zM19.500 3v24M7 15.500h24"/></svg></button>
      <button aria-label="样式 19"><svg viewBox="0 0 38 30"><circle cx="19" cy="15" r="9.500"/><path d="M9.500 5.500h19v19h-19zM7 3l24 24M31 3L7 27"/></svg></button>
      <button aria-label="样式 20"><svg viewBox="0 0 38 30"><circle cx="19" cy="15" r="9.500"/><path d="M9.500 5.500h19v19h-19zM19.500 6v10"/></svg></button>
    </div>
    <div class="mt-[45px] flex items-center pl-[5px] text-xs">
      <label for="size" class="w-[65px] pt-[2px] whitespace-nowrap">点大小<span class="text-[10px]">(<u>S</u>):</span></label>
      <input id="size" type="text" value="5.0000" class="h-[18px] w-[111px] border border-[#e0e0e0] border-t-[#888] bg-white pl-[2px] text-[10px]">
      <span class="ml-2 pt-[2px] text-[10px]">%</span>
    </div>
    <fieldset class="mt-[23px] pl-[5px] text-xs leading-[18px]">
      <label class="flex items-center gap-1"><input type="radio" name="mode" checked class="size-3 appearance-none rounded-full border border-[#6d7c88] bg-[radial-gradient(#1f4a70_0_3px,#dfe9f0_4px)]">相对于屏幕设置大小<span class="-ml-1 text-[10px]">(<u>R</u>)</span></label>
      <label class="flex items-center gap-1"><input type="radio" name="mode" class="size-3 appearance-none rounded-full border border-[#999] bg-[radial-gradient(#d5d5d5_0_2px,#f5f5f5_5px)]">按绝对单位设置大小<span class="-ml-1 text-[10px]">(<u>A</u>)</span></label>
    </fieldset>
    <div class="mt-[4px] flex gap-[6px] pl-[5px] text-xs [&>button]:h-[19px] [&>button]:w-[72px] [&>button]:rounded-xs [&>button]:border [&>button]:leading-4">
      <button class="border-[#2f7f9c] bg-linear-to-b from-[#eef8fb] to-[#c2e4ef] shadow-[0_0_0_1px_#5fd0ee_inset]">确定</button>
      <button class="border-[#777] bg-linear-to-b from-[#f3f3f3] to-[#d0d0d0]">取消</button>
      <button class="border-[#777] bg-linear-to-b from-[#f3f3f3] to-[#d0d0d0]">帮助<span class="text-[10px]">(<u>H</u>)</span></button>
    </div>
  </div>
</div>

<!-- Pointer arrow -->
<svg class="pointer-events-none absolute top-[296px] left-[592px] h-[132px] w-[124px]" viewBox="0 0 124 132"><path fill="#e8393d" d="M2 2l18 4-2 5c31 34 65 74 104 119C80 95 45 58 11 19l-4 2z"/></svg>

<!-- Watermark -->
<div class="absolute top-[605px] right-[55px] flex h-[85px] w-[180px] items-center gap-3 bg-[#212f55] pl-[14px] text-[#c6cad6]">
  <svg class="h-9 w-[35px] shrink-0" viewBox="0 0 35 36" fill="none" stroke="currentColor" stroke-width="2.500" stroke-linecap="round"><path d="M13 28h-3c-2 0-3-1-3-3V6c0-3 2-5 5-3l18 11c3 2 3 6 0 8L13 33c-5 3-11 0-11-6V9"/><path fill="currentColor" stroke="none" d="M14 12l8 5-8 5z"/><path stroke-width="2" stroke-linecap="butt" d="M24 14v7"/></svg>
  <div class="flex flex-col gap-1 pb-1 whitespace-nowrap">
    <div class="text-[26px] leading-8 font-bold">溜溜自学</div>
    <div class="font-['DejaVu_Sans',sans-serif] text-xs leading-[14px]">zixue.3D66.COM</div>
  </div>
</div>
</body>
</html>
